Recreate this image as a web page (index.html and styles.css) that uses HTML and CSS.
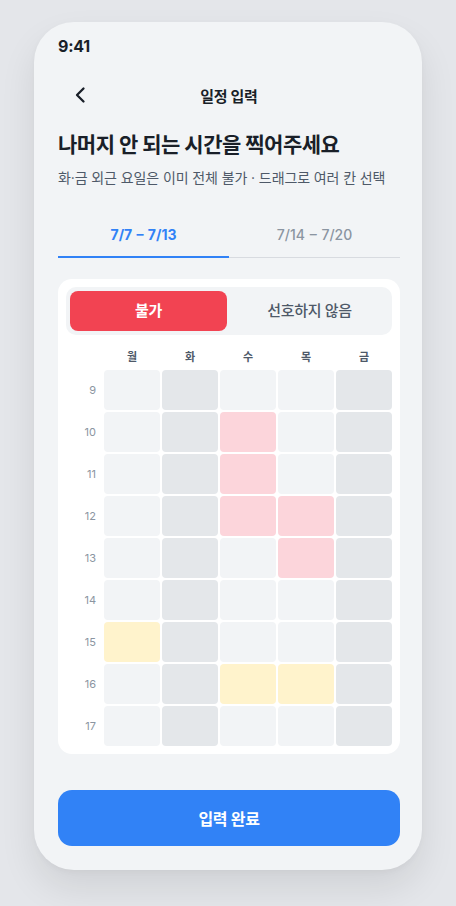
FILE: index.html
```html
<!DOCTYPE html>
<html lang="ko">
<head>
<meta charset="utf-8">
<title>일정 입력</title>
<link rel="stylesheet" href="styles.css">
</head>
<body>
<div class="phone">
  <div class="status">9:41</div>
  <header class="nav">
    <button class="back" aria-label="뒤로">
      <svg width="24" height="24" viewBox="0 0 24 24"><path d="M15.5 5.5 L9 12 L15.5 18.5" fill="none" stroke="#191f28" stroke-width="2.3" stroke-linecap="round" stroke-linejoin="round"/></svg>
    </button>
    <div class="nav-title">일정 입력</div>
    <div class="nav-spacer"></div>
  </header>
  <h1 class="title">나머지 안 되는 시간을 찍어주세요</h1>
  <p class="subtitle">화·금 외근 요일은 이미 전체 불가 · 드래그로 여러 칸 선택</p>
  <div class="tabs">
    <div class="tab active">7/7 – 7/13</div>
    <div class="tab">7/14 – 7/20</div>
  </div>
  <section class="card">
    <div class="toggle">
      <div class="opt on">불가</div>
      <div class="opt">선호하지 않음</div>
    </div>
    <div class="grid days">
      <div></div><div class="day">월</div><div class="day">화</div><div class="day">수</div><div class="day">목</div><div class="day">금</div>
    </div>
    <div class="grid cells">
      <div class="hr">9</div><div class="c"></div><div class="c d"></div><div class="c"></div><div class="c"></div><div class="c d"></div>
      <div class="hr">10</div><div class="c"></div><div class="c d"></div><div class="c no"></div><div class="c"></div><div class="c d"></div>
      <div class="hr">11</div><div class="c"></div><div class="c d"></div><div class="c no"></div><div class="c"></div><div class="c d"></div>
      <div class="hr">12</div><div class="c"></div><div class="c d"></div><div class="c no"></div><div class="c no"></div><div class="c d"></div>
      <div class="hr">13</div><div class="c"></div><div class="c d"></div><div class="c"></div><div class="c no"></div><div class="c d"></div>
      <div class="hr">14</div><div class="c"></div><div class="c d"></div><div class="c"></div><div class="c"></div><div class="c d"></div>
      <div class="hr">15</div><div class="c pref"></div><div class="c d"></div><div class="c"></div><div class="c"></div><div class="c d"></div>
      <div class="hr">16</div><div class="c"></div><div class="c d"></div><div class="c pref"></div><div class="c pref"></div><div class="c d"></div>
      <div class="hr">17</div><div class="c"></div><div class="c d"></div><div class="c"></div><div class="c"></div><div class="c d"></div>
    </div>
  </section>
  <button class="cta">입력 완료</button>
</div>
</body>
</html>
```
FILE: styles.css
```css
* { box-sizing: border-box; }
html {
  margin: 0;
  padding: 0;
  background: #e4e6ea;
  min-height: 100%;
}
body {
  margin: 0;
  min-height: 906px;
  background: #e4e6ea;
  font-family: Inter, "Noto Sans CJK KR", "Noto Sans", sans-serif;
  color: #191f28;
  padding: 22px 34px 0;
}
.phone {
  width: 388px;
  height: 848px;
  background: #f2f4f6;
  border-radius: 40px;
  box-shadow: 0 18px 36px rgba(0, 0, 0, 0.09), 0 2px 6px rgba(0, 0, 0, 0.03);
  padding: 0 22px 24px 24px;
  display: flex;
  flex-direction: column;
}
.status {
  padding-top: 14px;
  height: 45px;
  line-height: 20px;
  font-size: 16px;
  font-weight: 700;
  letter-spacing: -0.2px;
}
.nav {
  height: 56px;
  display: flex;
  align-items: center;
}
.back {
  width: 44px;
  height: 44px;
  padding: 0;
  border: 0;
  background: none;
  display: flex;
  align-items: center;
  justify-content: center;
}
.nav-title {
  flex: 1;
  text-align: center;
  font-size: 15px;
  font-weight: 700;
  letter-spacing: -0.3px;
}
.nav-spacer { width: 44px; }
.title {
  margin: 8px 0 0;
  font-size: 21px;
  line-height: 28px;
  font-weight: 700;
  letter-spacing: -0.5px;
}
.subtitle {
  margin: 9px 0 0;
  font-size: 14px;
  line-height: 20px;
  color: #4e5968;
  letter-spacing: -0.1px;
}
.tabs {
  margin-top: 26px;
  display: grid;
  grid-template-columns: 1fr 1fr;
  box-shadow: inset 0 -1px 0 #d8dbe0;
}
.tab {
  height: 44px;
  line-height: 42px;
  text-align: center;
  font-size: 14px;
  font-weight: 500;
  color: #8b95a1;
  border-bottom: 2px solid transparent;
  letter-spacing: 0;
  word-spacing: 1px;
}
.tab.active {
  color: #3182f6;
  font-weight: 700;
  border-bottom-color: #3182f6;
}
.card {
  margin-top: 21px;
  background: #fff;
  border-radius: 14px;
  padding: 8px;
}
.toggle {
  background: #f2f4f6;
  border-radius: 10px;
  padding: 4px;
  display: grid;
  grid-template-columns: 1fr 1fr;
  gap: 4px;
}
.opt {
  height: 40px;
  line-height: 40px;
  text-align: center;
  font-size: 15px;
  font-weight: 500;
  color: #4e5968;
  border-radius: 8px;
  letter-spacing: -0.3px;
}
.opt.on {
  background: #f24352;
  color: #fff;
  font-weight: 700;
}
.grid {
  display: grid;
  grid-template-columns: 36px repeat(5, 1fr);
  gap: 2px;
}
.days {
  margin-top: 12px;
  margin-bottom: 3px;
}
.day {
  line-height: 20px;
  text-align: center;
  font-size: 11px;
  font-weight: 700;
  color: #4e5968;
}
.cells { grid-auto-rows: 40px; }
.hr {
  display: flex;
  align-items: center;
  justify-content: flex-end;
  padding-right: 6px;
  font-size: 11px;
  color: #8b95a1;
}
.c {
  background: #f2f4f6;
  border-radius: 4px;
}
.c.d { background: #e4e7ea; }
.c.no { background: #fcd5db; }
.c.pref { background: #fff3cc; }
.cta {
  margin-top: auto;
  height: 56px;
  border: 0;
  border-radius: 14px;
  background: #3182f6;
  color: #fff;
  font-family: inherit;
  font-size: 16px;
  font-weight: 700;
  letter-spacing: -0.3px;
  width: 342px;
}
```
